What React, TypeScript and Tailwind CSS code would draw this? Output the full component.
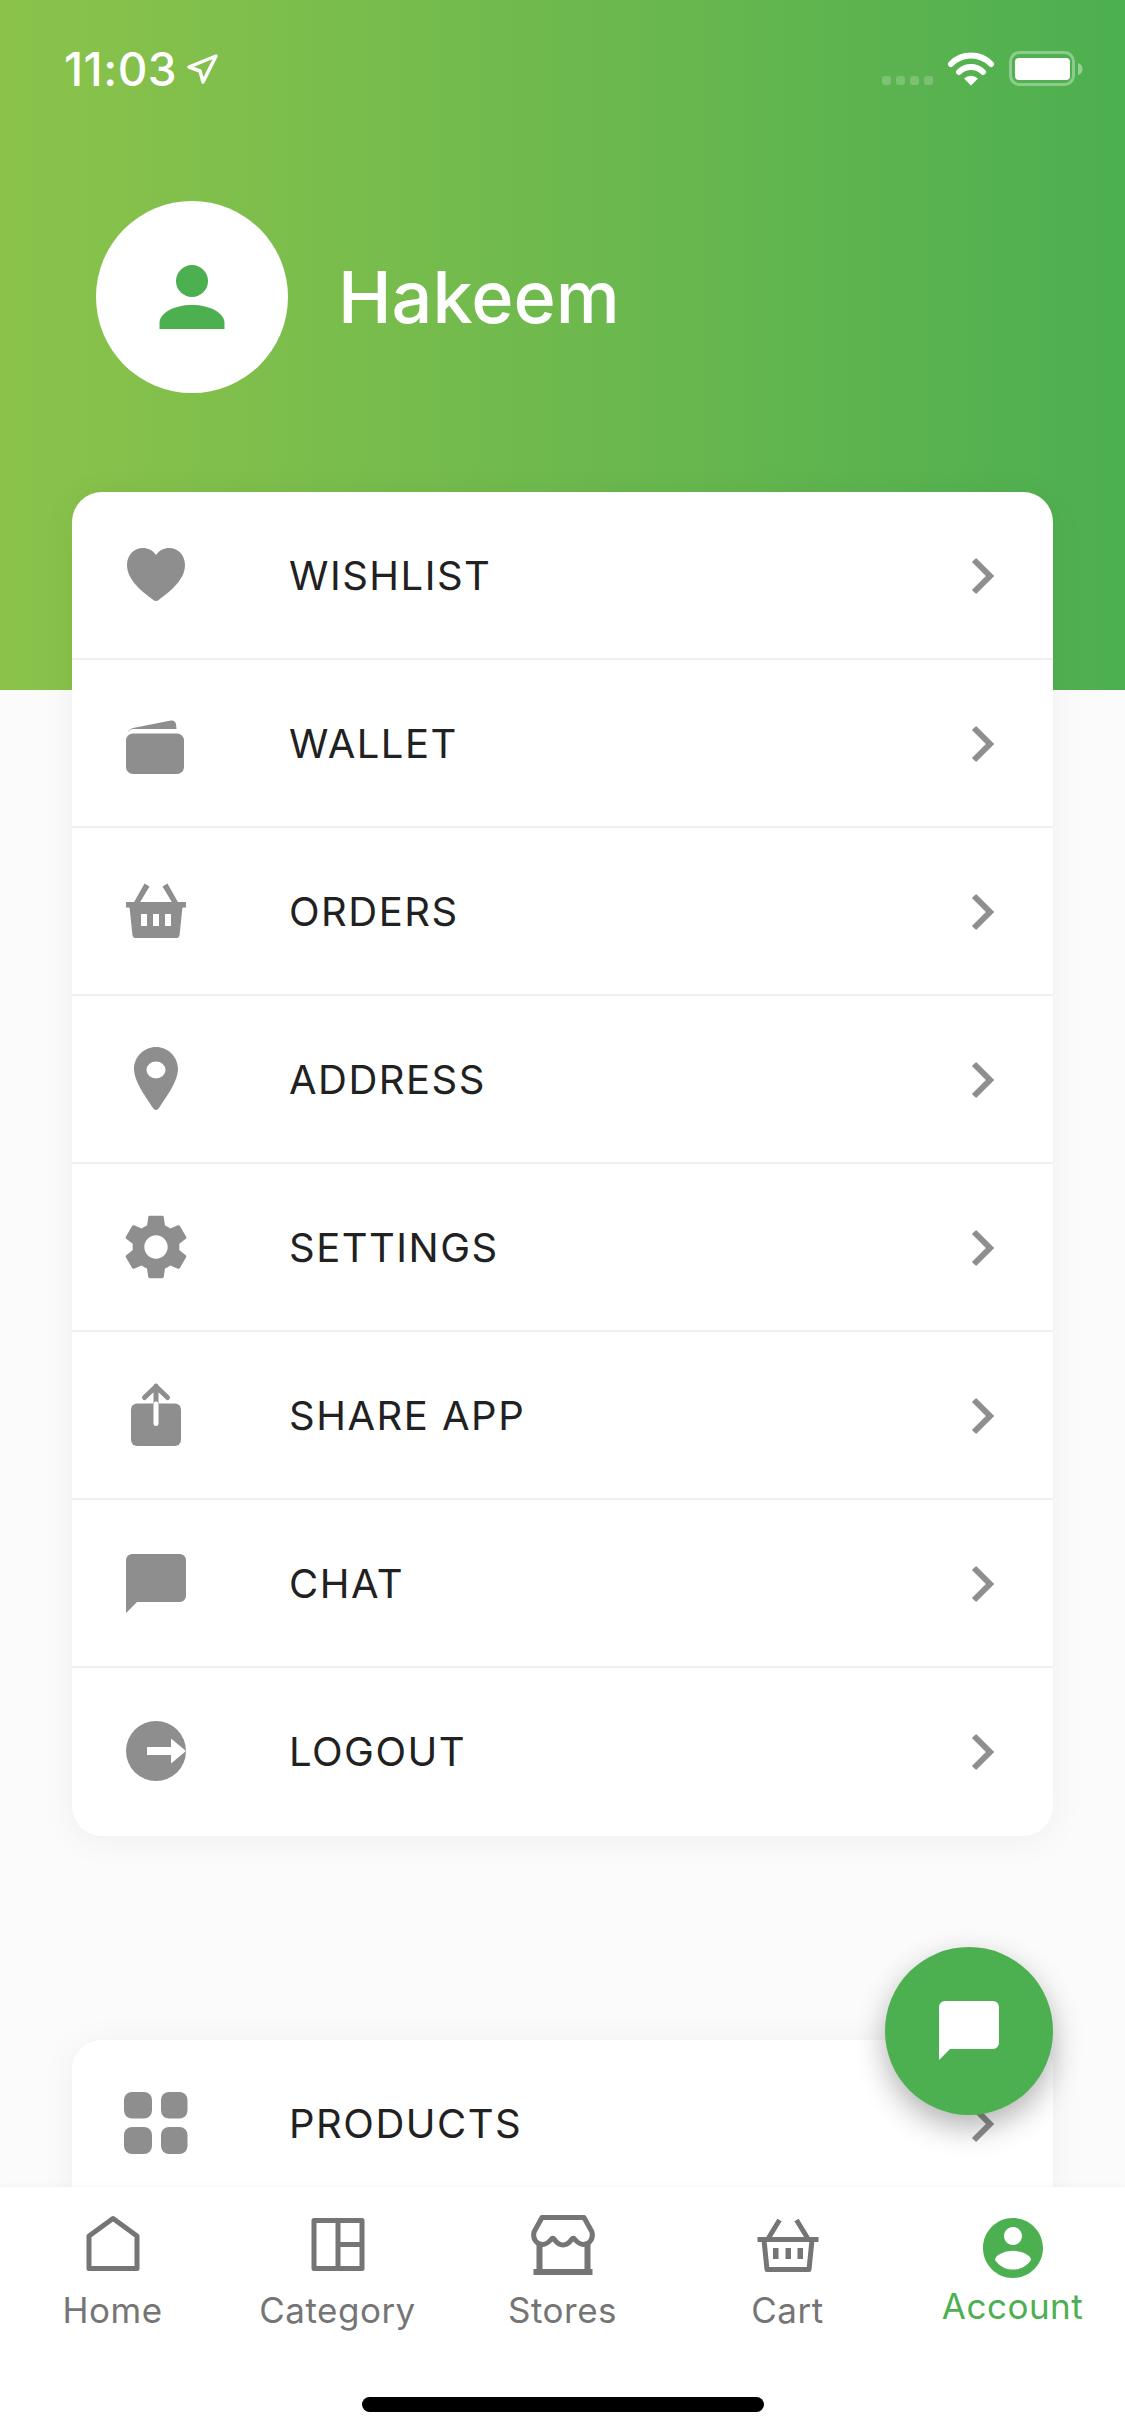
import React from 'react';
import { ReactNode } from 'react';

const GRAY = '#8e8e8e';
const NAV_GRAY = '#757575';
const GREEN = '#4caf50';

const Icon: React.FC<{ children: ReactNode }> = ({ children }) => (
  <svg viewBox="0 0 72 72" className="w-[72px] h-[72px] shrink-0" fill={GRAY}>
    {children}
  </svg>
);

const menuIcons: Record<string, ReactNode> = {
  heart: (
    <path d="M36 61c-1 0-2-.6-3-1.3C20 50 7 39 7 25 7 15 14 8 23 8c5 0 10 2.5 13 7 3-4.5 8-7 13-7 9 0 16 7 16 17 0 14-13 25-26 34.7-1 .7-2 1.3-3 1.3z" />
  ),
  wallet: (
    <>
      <path d="M8 24Q9 21 13 20L51 12.5Q55 12 56 16L56.5 21H13Q10 21 8 24z" />
      <rect x="6" y="25.5" width="58" height="40.5" rx="7" />
    </>
  ),
  basket: (
    <>
      <path d="M24.5 7.5L29.5 10.5L19 28H13zM47.5 7.5L42.5 10.5L53 28H59z" />
      <rect x="6" y="26" width="60" height="5.5" />
      <path fillRule="evenodd" d="M9.5 31H62.5L59.5 59.5Q59 62 56.5 62H15.5Q13 62 12.5 59.5zM21 38V50H27V38zM33 38V50H39V38zM45 38V50H51V38z" />
    </>
  ),
  pin: (
    <path fillRule="evenodd" d="M36 3C24 3 14 13 14 25C14 38 28 56 33 64C34.5 66.5 37.5 66.5 39 64C44 56 58 38 58 25C58 13 48 3 36 3zM36 17.5A9.5 8.5 0 1 1 36 34.500A9.500 8.500 0 1 1 36 17.500z" />
  ),
  gear: (
    <g transform="translate(-3 -4) scale(3.25)">
      <path d="M19.14 12.94c.04-.3.06-.61.06-.94 0-.32-.02-.64-.07-.94l2.03-1.58c.18-.14.23-.41.12-.61l-1.92-3.32c-.12-.22-.37-.29-.59-.22l-2.39.96c-.5-.38-1.03-.7-1.62-.94l-.36-2.54c-.04-.24-.24-.41-.48-.41h-3.84c-.24 0-.43.17-.47.41l-.36 2.54c-.59.24-1.13.57-1.62.94l-2.39-.96c-.22-.08-.47 0-.59.22L2.74 8.87c-.12.21-.08.47.12.61l2.03 1.58c-.05.3-.09.63-.09.94s.02.64.07.94l-2.03 1.58c-.18.14-.23.41-.12.61l1.92 3.32c.12.22.37.29.59.22l2.39-.96c.5.38 1.03.7 1.62.94l.36 2.54c.05.24.24.41.48.41h3.84c.24 0 .44-.17.47-.41l.36-2.54c.59-.24 1.13-.56 1.62-.94l2.39.96c.22.08.47 0 .59-.22l1.92-3.32c.12-.22.07-.47-.12-.61l-2.01-1.58zM12 15.6c-1.98 0-3.6-1.62-3.6-3.600s1.62-3.600 3.600-3.600 3.600 1.620 3.600 3.600-1.620 3.600-3.600 3.600z" />
    </g>
  ),
  share: (
    <>
      <rect x="11" y="23.600" width="50" height="42.400" rx="6" />
      <path d="M36 6V24M24.500 17.500L36 6.500L47.500 17.500" fill="none" stroke={GRAY} strokeWidth="5" strokeLinecap="round" strokeLinejoin="round" />
      <path d="M36 24V43.500" stroke="#fff" strokeWidth="5" strokeLinecap="round" fill="none" />
    </>
  ),
  chat: <path d="M12 6H60a6 6 0 0 1 6 6V48a6 6 0 0 1-6 6H17L6 65V12a6 6 0 0 1 6-6z" />,
  logout: (
    <>
      <circle cx="36" cy="35" r="30" />
      <path d="M27 31H51V22.500L66 35L51 47.500V39H27z" fill="#fff" />
    </>
  ),
  grid: (
    <>
      <rect x="4" y="4" width="28" height="26.500" rx="8" />
      <rect x="41" y="4" width="26.500" height="26.500" rx="8" />
      <rect x="4" y="39" width="28" height="27" rx="8" />
      <rect x="41" y="39" width="26.500" height="27" rx="8" />
    </>
  ),
};

const mainMenu = [
  { label: 'WISHLIST', icon: 'heart' },
  { label: 'WALLET', icon: 'wallet' },
  { label: 'ORDERS', icon: 'basket' },
  { label: 'ADDRESS', icon: 'pin' },
  { label: 'SETTINGS', icon: 'gear' },
  { label: 'SHARE APP', icon: 'share' },
  { label: 'CHAT', icon: 'chat' },
  { label: 'LOGOUT', icon: 'logout' },
];

const MenuRow: React.FC<{ label: string; icon: string; last?: boolean }> = ({ label, icon, last }) => (
  <div className={`h-[168px] flex items-center pl-[48px] pr-[48px] ${last ? '' : 'pt-[2px] border-b-2 border-[#f0f0f0]'}`}>
    <Icon>{menuIcons[icon]}</Icon>
    <span className="ml-[97px] flex-1 text-[40px] leading-none tracking-[1.5px] text-[#212121]">{label}</span>
    <svg viewBox="0 0 72 72" className="w-[72px] h-[72px] shrink-0" fill="none">
      <path d="M41 20L57 36L41 52" stroke={GRAY} strokeWidth="6" />
    </svg>
  </div>
);

const navStroke = { fill: 'none', stroke: NAV_GRAY, strokeWidth: 5 };

const navItems: { label: string; icon: ReactNode }[] = [
  {
    label: 'Home',
    icon: <path {...navStroke} strokeLinejoin="round" d="M12 28L36 10.500L60 28V60.500H12z" />,
  },
  {
    label: 'Category',
    icon: <path {...navStroke} strokeLinejoin="round" d="M12 12.500H60V60.500H12zM36 12.500V60.500M36 36.500H60" />,
  },
  {
    label: 'Stores',
    icon: (
      <>
        <path {...navStroke} strokeLinejoin="round" d="M15 9.500H57L65 24C66.500 30 63 36.500 56.500 36.500C53 36.500 50 34 47.500 31C47 30 45.500 30 45 31C42.500 34.500 39.500 37 36 37C32.500 37 29.500 34.500 27 31C26.500 30 25 30 24.500 31C22 34 19 36.500 15.500 36.500C9 36.500 5.500 30 7 24z" />
        <path {...navStroke} d="M12.500 36V64M60.500 36V64" strokeWidth="6" />
        <path {...navStroke} d="M6.500 64H65.500" strokeWidth="6" />
      </>
    ),
  },
  {
    label: 'Cart',
    icon: (
      <>
        <path {...navStroke} d="M27.500 12L16.500 30M44.500 12L55.500 30M5.500 31.500H66.500" />
        <path {...navStroke} strokeLinejoin="round" d="M12 32L15 61.500H57L60 32" />
        <path fill={NAV_GRAY} d="M21 40H26.500V51H21zM33.500 40H39V51H33.500zM45.500 40H51V51H45.500z" />
      </>
    ),
  },
];

const StatusBar = () => (
  <div className="h-[138px] flex items-center justify-between pl-[64px] pr-[42px]">
    <div className="flex items-center">
      <span className="text-[46px] leading-none font-medium text-white tracking-[0.5px]">11:03</span>
      <svg viewBox="0 0 34 34" className="w-[34px] h-[34px] ml-[8px]" fill="none">
        <path d="M31 4L4 15L15 19L18 30z" stroke="#fff" strokeWidth="3.500" strokeLinejoin="round" />
      </svg>
    </div>
    <div className="flex items-center">
      <div className="flex gap-[5px] mt-[23px] mr-[14px]">
        <div className="w-[9px] h-[9px] rounded-[3px] bg-white/20" />
        <div className="w-[9px] h-[9px] rounded-[3px] bg-white/20" />
        <div className="w-[9px] h-[9px] rounded-[3px] bg-white/20" />
        <div className="w-[9px] h-[9px] rounded-[3px] bg-white/20" />
      </div>
      <svg viewBox="0 0 48 36" className="w-[48px] h-[36px] mr-[14px] -mt-[2px]" fill="none">
        <path d="M4 14A28 28 0 0 1 44 14M12 22A17 17 0 0 1 36 22" stroke="#fff" strokeWidth="6" strokeLinecap="round" />
        <path d="M17 28.500A10 10 0 0 1 31 28.500L24 35.500z" fill="#fff" />
      </svg>
      <svg viewBox="0 0 74 36" className="w-[74px] h-[36px]" fill="none">
        <rect x="1.500" y="1.500" width="63" height="32" rx="9" stroke="#fff" strokeOpacity="0.35" strokeWidth="3" />
        <rect x="6" y="7" width="55" height="22" rx="4" fill="#fff" />
        <path d="M69 12C72 13 73.500 15 73.500 18C73.500 21 72 23 69 24z" fill="#fff" fillOpacity="0.4" />
      </svg>
    </div>
  </div>
);

const App: React.FC = () => {
  return (
    <div className="relative w-[1125px] h-[2436px] overflow-hidden flex flex-col bg-[#fbfbfb] font-['Inter',sans-serif]">
      <div className="h-[2187px] overflow-hidden shrink-0">
        <div className="h-[690px] bg-linear-to-r from-[#8bc34a] to-[#4caf50]">
          <StatusBar />
          <div className="flex items-center mt-[63px] ml-[96px]">
            <div className="w-[192px] h-[192px] rounded-full bg-white flex items-center justify-center">
              <svg viewBox="0 0 72 72" className="w-[72px] h-[72px]" fill={GREEN}>
                <circle cx="36" cy="20" r="16" />
                <path d="M3.500 68V62C3.500 52 18 44 36 44C54 44 68.500 52 68.500 62V68z" />
              </svg>
            </div>
            <span className="ml-[50px] text-[72px] leading-none font-medium text-white">Hakeem</span>
          </div>
        </div>

        <div className="relative -mt-[198px] mx-[72px] bg-white rounded-[30px] shadow-[0_4px_36px_rgba(0,0,0,0.05)]">
          {mainMenu.map((item, i) => (
            <MenuRow key={item.label} label={item.label} icon={item.icon} last={i === mainMenu.length - 1} />
          ))}
        </div>

        <div className="mt-[204px] mx-[72px] bg-white rounded-t-[30px] shadow-[0_4px_36px_rgba(0,0,0,0.05)]">
          <MenuRow label="PRODUCTS" icon="grid" />
        </div>
      </div>

      <div className="flex-1 relative bg-white shadow-[0_-1px_6px_rgba(0,0,0,0.04)]">
        <div className="grid grid-cols-5 pt-[21px]">
          {navItems.map((item) => (
            <div key={item.label} className="flex flex-col items-center">
              <svg viewBox="0 0 72 72" className="w-[72px] h-[72px]">
                {item.icon}
              </svg>
              <span className="mt-[8px] text-[35px] leading-[44px] tracking-[0.5px] text-[#757575]">{item.label}</span>
            </div>
          ))}
          <div className="flex flex-col items-center pt-[4px]">
            <svg viewBox="0 0 24 24" className="w-[72px] h-[72px]" fill={GREEN}>
              <path d="M12 2C6.480 2 2 6.480 2 12s4.480 10 10 10 10-4.480 10-10S17.520 2 12 2zm0 3c1.660 0 3 1.340 3 3s-1.340 3-3 3-3-1.340-3-3 1.340-3 3-3zm0 14.200c-2.500 0-4.710-1.280-6-3.220.030-1.990 4-3.080 6-3.080 1.990 0 5.970 1.090 6 3.080-1.290 1.940-3.500 3.220-6 3.220z" />
            </svg>
            <span className="text-[35px] leading-[44px] tracking-[0.5px] text-[#4caf50]">Account</span>
          </div>
        </div>
        <div className="absolute bottom-[24px] left-[362px] w-[402px] h-[15px] rounded-full bg-black" />
      </div>

      <div className="absolute left-[885px] top-[1947px] w-[168px] h-[168px] rounded-full bg-[#4caf50] flex items-center justify-center shadow-[0_12px_30px_rgba(0,0,0,0.3)]">
        <svg viewBox="0 0 72 72" className="w-[72px] h-[72px]" fill="#fff">
          <path d="M12 6H60a6 6 0 0 1 6 6V48a6 6 0 0 1-6 6H17L6 65V12a6 6 0 0 1 6-6z" />
        </svg>
      </div>
    </div>
  );
};

export default App;
